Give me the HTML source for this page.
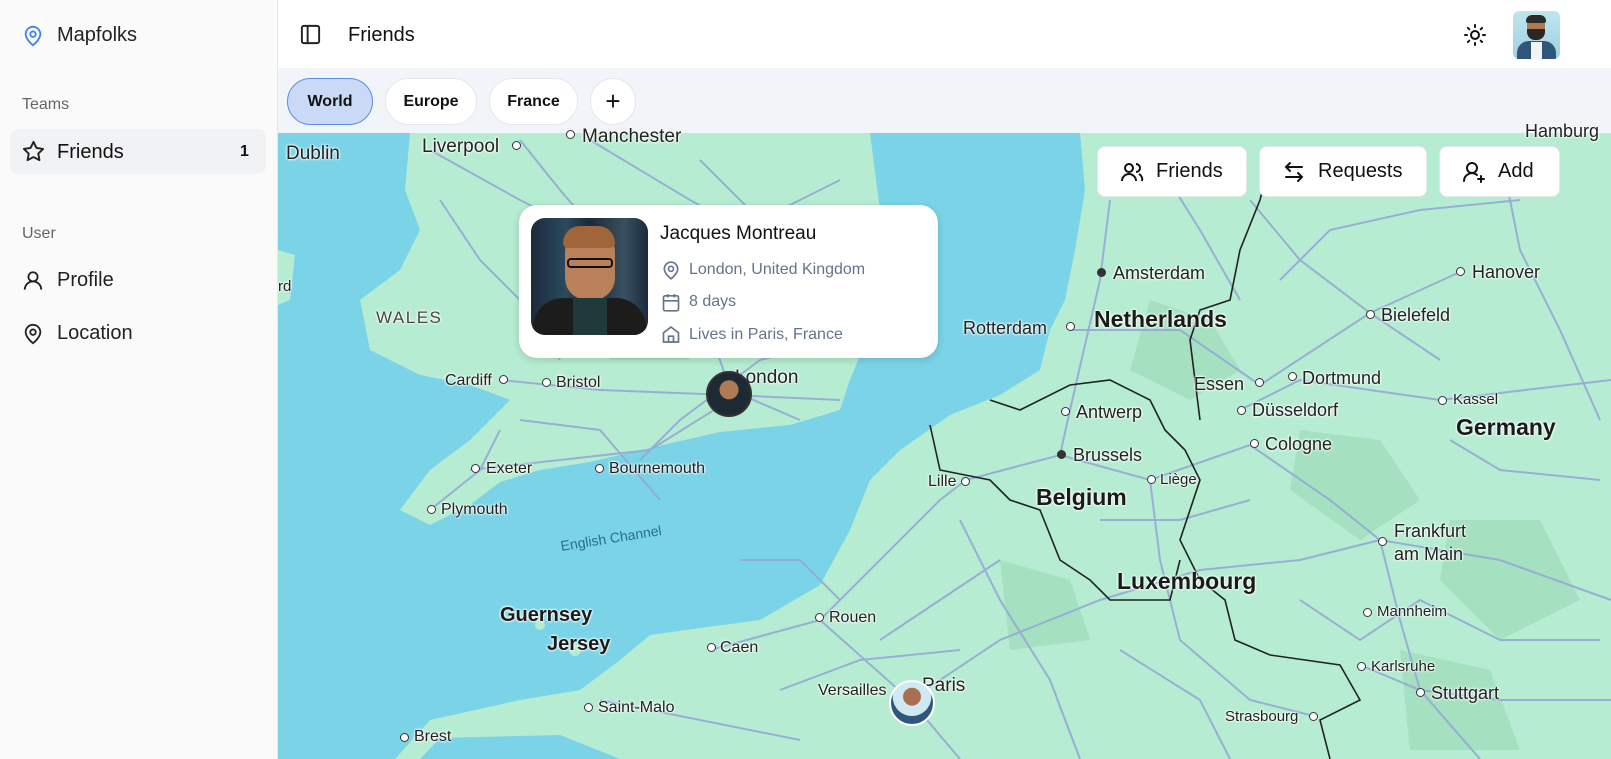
<!DOCTYPE html>
<html><head><meta charset="utf-8"><style>
*{box-sizing:border-box;margin:0;padding:0}
body{width:1611px;height:759px;overflow:hidden;font-family:"Liberation Sans",sans-serif;color:#111;background:#fff;position:relative}
.sb{position:absolute;left:0;top:0;width:278px;height:759px;background:#fafafa;border-right:1px solid #e5e7eb}
.abs{position:absolute}
.lbl{position:absolute;font-size:16px;color:#222;white-space:nowrap;text-shadow:0 0 2px #fff,0 0 2px #fff,0 0 3px #fff}
.big{font-size:23px;font-weight:bold;color:#1a1a1a}
.dot{position:absolute;width:9px;height:9px;border:1.5px solid #333;border-radius:50%;background:#fff}
.btn{position:absolute;top:146px;height:51px;background:#fff;border-radius:8px;border:1px solid #e5e7eb;display:flex;align-items:center;font-size:20px;font-weight:500;gap:12px;padding-left:22px}
.pill{position:absolute;top:78px;height:47px;border-radius:24px;background:#fff;border:1px solid #e5e7eb;font-size:16px;font-weight:bold;display:flex;align-items:center;justify-content:center}
</style></head><body>
<div class="sb">
 <svg class="abs" style="left:22px;top:24px" width="22" height="24" viewBox="0 0 24 24" fill="none" stroke="#3b82f6" stroke-width="2"><path d="M20 10c0 6-8 12-8 12S4 16 4 10a8 8 0 0 1 16 0z"/><circle cx="12" cy="10" r="3"/></svg>
 <div class="abs" style="left:57px;top:24px;font-size:20px;font-weight:500;color:#222">Mapfolks</div>
 <div class="abs" style="left:22px;top:96px;font-size:16px;color:#666">Teams</div>
 <div class="abs" style="left:10px;top:129px;width:256px;height:45px;background:#f1f2f3;border-radius:8px"></div>
 <svg class="abs" style="left:22px;top:140px" width="23" height="23" viewBox="0 0 24 24" fill="none" stroke="#222" stroke-width="2" stroke-linejoin="round"><path d="M12 2l3.1 6.3 6.9 1-5 4.9 1.2 6.8L12 17.8 5.8 21l1.2-6.8-5-4.9 6.9-1z"/></svg>
 <div class="abs" style="left:57px;top:141px;font-size:20px;font-weight:500">Friends</div>
 <div class="abs" style="left:240px;top:143px;font-size:16px;font-weight:bold">1</div>
 <div class="abs" style="left:22px;top:225px;font-size:16px;color:#666">User</div>
 <svg class="abs" style="left:22px;top:269px" width="22" height="23" viewBox="0 0 24 24" fill="none" stroke="#222" stroke-width="2"><circle cx="12" cy="8" r="5"/><path d="M3 22a9 9 0 0 1 18 0"/></svg>
 <div class="abs" style="left:57px;top:269px;font-size:20px;color:#222">Profile</div>
 <svg class="abs" style="left:22px;top:322px" width="22" height="24" viewBox="0 0 24 24" fill="none" stroke="#222" stroke-width="2"><path d="M20 10c0 6-8 12-8 12S4 16 4 10a8 8 0 0 1 16 0z"/><circle cx="12" cy="10" r="3"/></svg>
 <div class="abs" style="left:57px;top:322px;font-size:20px;color:#222">Location</div>
</div>
<svg class="abs" style="left:299px;top:23px" width="23" height="23" viewBox="0 0 24 24" fill="none" stroke="#222" stroke-width="2"><rect x="3" y="3" width="18" height="18" rx="2"/><path d="M9 3v18"/></svg>
<div class="abs" style="left:348px;top:24px;font-size:20px">Friends</div>
<svg class="abs" style="left:1463px;top:23px" width="24" height="24" viewBox="0 0 24 24" fill="none" stroke="#111" stroke-width="2" stroke-linecap="round"><circle cx="12" cy="12" r="4"/><path d="M12 2v2M12 20v2M4.9 4.9l1.4 1.4M17.7 17.7l1.4 1.4M2 12h2M20 12h2M4.9 19.1l1.4-1.4M17.7 6.3l1.4-1.4"/></svg>
<div class="abs" style="left:1513px;top:11px;width:47px;height:48px;border-radius:6px;background:linear-gradient(#bfe6f0,#9fd0e0);overflow:hidden">
 <div class="abs" style="left:14px;top:6px;width:18px;height:22px;border-radius:8px;background:#b07a55"></div>
 <div class="abs" style="left:13px;top:4px;width:20px;height:8px;border-radius:6px 6px 2px 2px;background:#2b2b2b"></div>
 <div class="abs" style="left:14px;top:18px;width:18px;height:11px;border-radius:0 0 8px 8px;background:#2d2520"></div>
 <div class="abs" style="left:4px;top:30px;width:39px;height:20px;border-radius:12px 12px 0 0;background:#2f5678"></div>
 <div class="abs" style="left:18px;top:31px;width:11px;height:17px;background:#f3f3f3"></div>
</div>
<div class="abs" style="left:278px;top:68px;width:1333px;height:65px;background:#f1f4f9"></div>
<div class="pill" style="left:287px;width:86px;background:#c9d9f6;border-color:#5b8de0">World</div>
<div class="pill" style="left:385px;width:92px">Europe</div>
<div class="pill" style="left:489px;width:89px">France</div>
<div class="pill" style="left:590px;width:46px;font-size:26px;font-weight:normal">+</div>
<svg class="abs" style="left:278px;top:133px" width="1333" height="626" viewBox="278 133 1333 626">
<rect x="278" y="133" width="1333" height="626" fill="#7ad3e6"/>
<g fill="#b6ecd1">
<path d="M410,133 L870,133 L880,210 L860,260 L870,330 L850,380 L840,410 L790,425 L720,432 L650,448 L590,462 L540,470 L500,482 L470,505 L430,525 L400,510 L430,470 L470,440 L510,400 L470,385 L420,375 L370,350 L360,300 L400,270 L420,230 L405,190 Z"/>
<path d="M278,250 L295,255 L290,300 L278,305 Z"/>
<path d="M1080,133 L1611,133 L1611,759 L620,759 L560,735 L440,738 L420,759 L395,759 L430,720 L520,700 L580,690 L620,660 L650,635 L700,628 L760,620 L820,585 L850,530 L870,480 L900,450 L950,415 L1000,395 L1040,370 L1050,330 L1065,300 L1075,250 L1085,190 Z"/>
<circle cx="540" cy="625" r="5"/><circle cx="575" cy="650" r="6"/>
</g>
<g fill="#a5e0c0">
<path d="M1150,300 l60,20 l30,50 l-50,30 l-60,-30z"/><path d="M1300,430 l80,10 l40,60 l-60,40 l-70,-50z"/><path d="M1450,520 l90,0 l40,80 l-80,40 l-60,-60z"/><path d="M1000,560 l70,20 l20,60 l-80,10z"/><path d="M600,300 l70,10 l20,50 l-80,0z"/><path d="M1400,650 l90,20 l30,80 l-110,0z"/>
</g>
<g stroke="#96a8d6" stroke-width="2" fill="none" opacity=".9">
<path d="M430,150 L520,200 L600,240 L700,300 L730,390 L800,420"/><path d="M520,140 L560,190 L620,260 L700,320"/><path d="M500,380 L600,390 L730,395 L840,400"/><path d="M470,470 L560,460 L650,450 L730,400"/><path d="M590,140 L690,200 L800,260 L860,300"/><path d="M430,510 L480,470 L500,430"/>
<path d="M710,650 L820,620 L910,700 L960,759"/><path d="M820,620 L880,560 L940,500 L966,480"/><path d="M966,480 L1060,455 L1150,480 L1250,445"/><path d="M1060,455 L1070,410 L1100,280 L1110,200"/><path d="M1070,330 L1180,330 L1260,385 L1370,313 L1460,272"/><path d="M1240,410 L1300,380 L1440,400 L1611,380"/><path d="M910,700 L1000,640 L1100,600 L1200,570 L1300,560 L1380,540"/><path d="M1380,540 L1400,620 L1420,690 L1480,759"/><path d="M1150,480 L1160,560 L1180,640 L1250,700 L1310,715"/><path d="M960,520 L1000,600 L1050,680 L1080,759"/><path d="M1250,445 L1330,500 L1380,540 L1500,560 L1611,600"/><path d="M1360,665 L1420,690 L1500,700 L1611,700"/><path d="M740,560 L800,560 L840,600"/><path d="M1250,200 L1300,260 L1370,313 L1440,360"/><path d="M1150,150 L1200,230 L1240,300"/><path d="M1500,150 L1520,250 L1560,330 L1600,420"/><path d="M600,700 L700,720 L800,740"/>
<path d="M440,200 L480,260 L520,300 L560,360"/><path d="M640,460 L680,420 L760,360 L840,340"/><path d="M700,160 L760,220 L840,180"/><path d="M520,420 L600,430 L660,500"/><path d="M1120,650 L1200,700 L1230,759"/><path d="M880,640 L940,600 L1000,560"/><path d="M1300,600 L1360,640 L1420,600 L1500,640 L1600,640"/><path d="M1450,440 L1500,470 L1600,480"/><path d="M1280,280 L1330,230 L1420,210 L1520,200"/><path d="M1100,520 L1180,520 L1250,500"/><path d="M780,690 L860,660 L960,650"/>
</g>
<g stroke="#222" stroke-width="1.6" fill="none">
<path d="M990,400 L1020,410 L1070,385 L1110,380 L1150,400 L1165,430 L1185,450 L1200,480 L1190,510 L1180,540 L1200,580 L1225,600 L1235,640 L1270,655 L1340,665 L1360,700 L1320,720 L1330,759"/>
<path d="M930,425 L940,470 L990,480 L1010,500 L1040,510 L1060,560 L1090,580 L1110,600 L1170,600 L1180,560"/>
<path d="M1200,420 L1195,380 L1190,340 L1200,310 L1230,300 L1240,250 L1260,200 L1270,160"/>
</g>
</svg>
<div class="lbl" style="left:286px;top:143px;font-size:19px;font-weight:500">Dublin</div>
<div class="lbl" style="left:422px;top:136px;font-size:19px">Liverpool</div><div class="dot" style="left:512px;top:141px"></div>
<div class="dot" style="left:566px;top:130px"></div><div class="lbl" style="left:582px;top:126px;font-size:19px">Manchester</div>
<div class="lbl" style="left:278px;top:278px;font-size:15px">rd</div>
<div class="lbl" style="left:376px;top:308px;font-size:17px;letter-spacing:1.5px;color:#444">WALES</div>
<div class="lbl" style="left:445px;top:372px">Cardiff</div><div class="dot" style="left:499px;top:375px"></div>
<div class="dot" style="left:542px;top:378px"></div><div class="lbl" style="left:556px;top:374px">Bristol</div>
<div class="lbl" style="left:735px;top:367px;font-size:19px;font-weight:500">London</div>
<div class="dot" style="left:471px;top:464px"></div><div class="lbl" style="left:486px;top:460px">Exeter</div>
<div class="dot" style="left:595px;top:464px"></div><div class="lbl" style="left:609px;top:460px">Bournemouth</div>
<div class="dot" style="left:427px;top:505px"></div><div class="lbl" style="left:441px;top:501px">Plymouth</div>
<div class="lbl" style="left:560px;top:530px;font-size:14px;color:#2a6f8a;transform:rotate(-9deg);text-shadow:none">English Channel</div>
<div class="lbl big" style="left:500px;top:604px;font-size:20px">Guernsey</div>
<div class="lbl big" style="left:547px;top:633px;font-size:20px">Jersey</div>
<div class="dot" style="left:707px;top:643px"></div><div class="lbl" style="left:720px;top:639px">Caen</div>
<div class="dot" style="left:815px;top:613px"></div><div class="lbl" style="left:829px;top:609px">Rouen</div>
<div class="lbl" style="left:818px;top:682px">Versailles</div><div class="lbl" style="left:922px;top:675px;font-size:19px;font-weight:500">Paris</div>
<div class="dot" style="left:584px;top:703px"></div><div class="lbl" style="left:598px;top:699px">Saint-Malo</div>
<div class="dot" style="left:400px;top:733px"></div><div class="lbl" style="left:414px;top:728px">Brest</div>
<div class="dot" style="left:1097px;top:268px;background:#333"></div><div class="lbl" style="left:1113px;top:263px;font-size:18px">Amsterdam</div>
<div class="lbl" style="left:963px;top:318px;font-size:18px">Rotterdam</div><div class="dot" style="left:1066px;top:322px"></div>
<div class="lbl big" style="left:1094px;top:306px">Netherlands</div>
<div class="lbl" style="left:1194px;top:374px;font-size:18px">Essen</div><div class="dot" style="left:1255px;top:378px"></div>
<div class="dot" style="left:1288px;top:372px"></div><div class="lbl" style="left:1302px;top:368px;font-size:18px">Dortmund</div>
<div class="dot" style="left:1061px;top:407px"></div><div class="lbl" style="left:1076px;top:402px;font-size:18px">Antwerp</div>
<div class="dot" style="left:1237px;top:406px"></div><div class="lbl" style="left:1252px;top:400px;font-size:18px">Düsseldorf</div>
<div class="dot" style="left:1250px;top:439px"></div><div class="lbl" style="left:1265px;top:434px;font-size:18px">Cologne</div>
<div class="dot" style="left:1057px;top:450px;background:#333"></div><div class="lbl" style="left:1073px;top:445px;font-size:18px">Brussels</div>
<div class="lbl" style="left:928px;top:473px">Lille</div><div class="dot" style="left:961px;top:477px"></div>
<div class="dot" style="left:1147px;top:475px"></div><div class="lbl" style="left:1160px;top:471px;font-size:15px">Liège</div>
<div class="lbl big" style="left:1036px;top:484px">Belgium</div>
<div class="lbl big" style="left:1117px;top:568px">Luxembourg</div>
<div class="dot" style="left:1456px;top:267px"></div><div class="lbl" style="left:1472px;top:262px;font-size:18px">Hanover</div>
<div class="dot" style="left:1366px;top:310px"></div><div class="lbl" style="left:1381px;top:305px;font-size:18px">Bielefeld</div>
<div class="dot" style="left:1438px;top:396px"></div><div class="lbl" style="left:1453px;top:391px;font-size:15px">Kassel</div>
<div class="lbl big" style="left:1456px;top:414px">Germany</div>
<div class="dot" style="left:1378px;top:537px"></div><div class="lbl" style="left:1394px;top:520px;font-size:18px;line-height:23px">Frankfurt<br>am Main</div>
<div class="dot" style="left:1363px;top:608px"></div><div class="lbl" style="left:1377px;top:603px;font-size:15px">Mannheim</div>
<div class="dot" style="left:1357px;top:662px"></div><div class="lbl" style="left:1371px;top:658px;font-size:15px">Karlsruhe</div>
<div class="dot" style="left:1416px;top:688px"></div><div class="lbl" style="left:1431px;top:683px;font-size:18px">Stuttgart</div>
<div class="lbl" style="left:1225px;top:708px;font-size:15px">Strasbourg</div><div class="dot" style="left:1309px;top:712px"></div>
<div class="lbl" style="left:1525px;top:121px;font-size:18px">Hamburg</div>
<div class="abs" style="left:706px;top:371px;width:46px;height:46px;border-radius:50%;background:radial-gradient(circle at 50% 40%,#b07a55 0 28%,#1e2a33 30%);border:2px solid #333"></div>
<div class="abs" style="left:889px;top:680px;width:46px;height:46px;border-radius:50%;background:radial-gradient(circle at 50% 35%,#a87050 0 25%,#cfe9f2 27% 55%,#2f5678 57%);border:2px solid #fff"></div>
<div class="btn" style="left:1097px;width:150px"><svg width="24" height="24" viewBox="0 0 24 24" fill="none" stroke="#111" stroke-width="2"><circle cx="9" cy="8" r="4"/><path d="M2 21a7 7 0 0 1 14 0M16 4a4 4 0 0 1 0 8M19 14a6 6 0 0 1 3 7"/></svg>Friends</div>
<div class="btn" style="left:1259px;width:168px"><svg width="24" height="24" viewBox="0 0 24 24" fill="none" stroke="#111" stroke-width="2" stroke-linecap="round"><path d="M20 7H4M8 3L4 7l4 4M4 17h16M16 13l4 4-4 4"/></svg>Requests</div>
<div class="btn" style="left:1439px;width:121px"><svg width="24" height="24" viewBox="0 0 24 24" fill="none" stroke="#111" stroke-width="2" stroke-linecap="round"><circle cx="10" cy="8" r="5"/><path d="M2 21a8 8 0 0 1 13-6M19 16v6M16 19h6"/></svg>Add</div>
<div class="abs" style="left:519px;top:205px;width:419px;height:153px;background:#fff;border-radius:18px;box-shadow:0 2px 8px rgba(0,0,0,.15)">
 <div class="abs" style="left:12px;top:13px;width:117px;height:117px;border-radius:14px;overflow:hidden;background:linear-gradient(90deg,#1a2a3a,#2b4a5f 30%,#1a2a3a 50%,#3a5060 80%,#1a2a3a)">
  <div class="abs" style="left:34px;top:12px;width:50px;height:70px;border-radius:22px;background:#b9805a"></div>
  <div class="abs" style="left:32px;top:8px;width:52px;height:22px;border-radius:20px 20px 6px 6px;background:#a0663a"></div>
  <div class="abs" style="left:36px;top:40px;width:46px;height:10px;border:2px solid #111;border-radius:4px"></div>
  <div class="abs" style="left:2px;top:80px;width:113px;height:40px;border-radius:30px 30px 0 0;background:#1c1c1c"></div>
  <div class="abs" style="left:42px;top:80px;width:34px;height:40px;background:#1f3a3a"></div>
 </div>
 <div class="abs" style="left:141px;top:18px;font-size:19px;font-weight:500">Jacques Montreau</div>
 <svg class="abs" style="left:142px;top:55px" width="20" height="21" viewBox="0 0 24 24" fill="none" stroke="#64748b" stroke-width="2"><path d="M20 10c0 6-8 12-8 12S4 16 4 10a8 8 0 0 1 16 0z"/><circle cx="12" cy="10" r="3"/></svg>
 <div class="abs" style="left:170px;top:56px;font-size:16px;color:#64748b">London, United Kingdom</div>
 <svg class="abs" style="left:142px;top:87px" width="20" height="21" viewBox="0 0 24 24" fill="none" stroke="#64748b" stroke-width="2"><rect x="3" y="4" width="18" height="18" rx="2"/><path d="M16 2v4M8 2v4M3 10h18"/></svg>
 <div class="abs" style="left:170px;top:88px;font-size:16px;color:#64748b">8 days</div>
 <svg class="abs" style="left:142px;top:119px" width="20" height="21" viewBox="0 0 24 24" fill="none" stroke="#64748b" stroke-width="2"><path d="M3 10l9-7 9 7v11H3z"/><path d="M9 21v-7h6v7"/></svg>
 <div class="abs" style="left:170px;top:121px;font-size:16px;color:#64748b">Lives in Paris, France</div>
</div>
</body></html>
